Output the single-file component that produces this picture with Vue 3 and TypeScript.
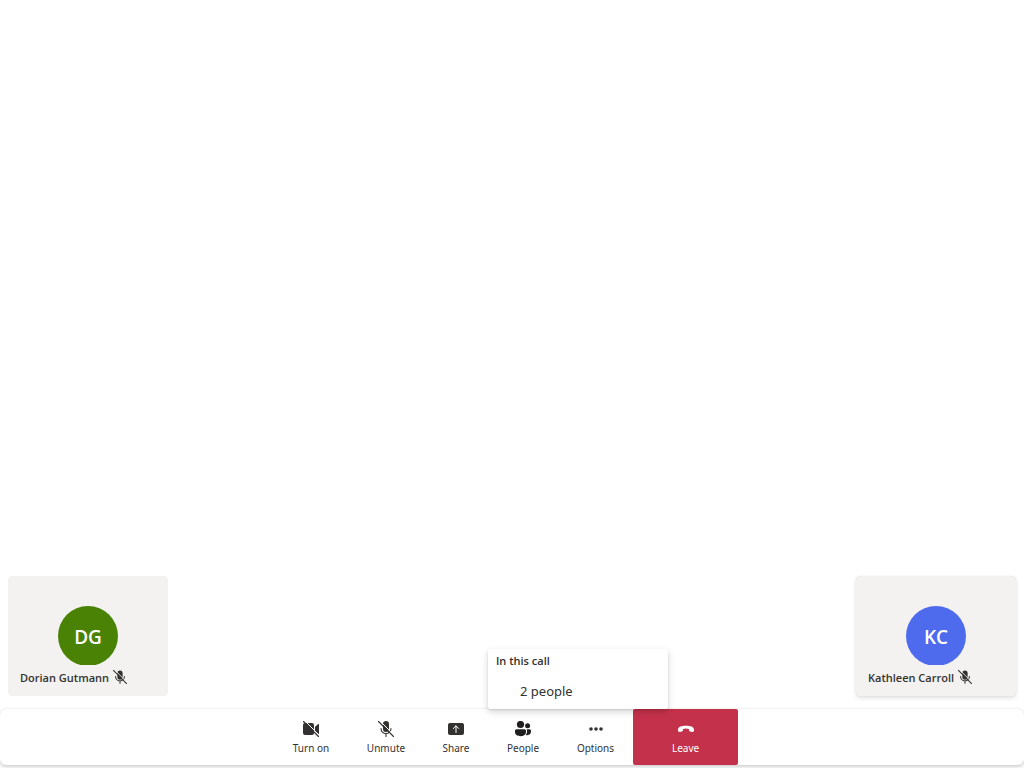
<script setup lang="ts">
import { ref } from 'vue'

interface Participant {
  name: string
  initials: string
  tone: string
  raised: boolean
}

interface Control {
  id: string
  label: string
}

const participants: Participant[] = [
  { name: 'Dorian Gutmann', initials: 'DG', tone: 'green', raised: false },
  { name: 'Kathleen Carroll', initials: 'KC', tone: 'blue', raised: true },
]

const controls: Control[] = [
  { id: 'camera', label: 'Turn on' },
  { id: 'mic', label: 'Unmute' },
  { id: 'share', label: 'Share' },
  { id: 'people', label: 'People' },
  { id: 'options', label: 'Options' },
  { id: 'leave', label: 'Leave' },
]

const peopleOpen = ref(true)

function press(id: string): void {
  if (id === 'people') peopleOpen.value = !peopleOpen.value
}
</script>

<template>
  <div class="call">
    <main class="stage">
      <section
        v-for="person in participants"
        :key="person.name"
        class="tile"
        :class="{ raised: person.raised }"
      >
        <div class="avatar" :class="person.tone">{{ person.initials }}</div>
        <div class="caption">
          <span>{{ person.name }}</span>
          <svg class="muted" viewBox="0 0 16 16" aria-hidden="true">
            <path d="M5 3.500a3 3 0 0 1 6 0V8a3 3 0 0 1-6 0z" fill="currentColor" />
            <path d="M3 7.500a5 5 0 0 0 10 0M8 12.500V15" fill="none" stroke="currentColor" stroke-width="1.2" stroke-linecap="round" />
            <path d="M1.300-.700 17 15" class="cut" />
            <path d="M.5.500l15 15" fill="none" stroke="currentColor" stroke-width="1.2" stroke-linecap="round" />
          </svg>
        </div>
      </section>
    </main>

    <nav class="bar" aria-label="Call controls">
      <div v-for="control in controls" :key="control.id" class="slot" :class="control.id">
        <button type="button" class="control" @click="press(control.id)">
          <svg class="icon" viewBox="0 0 16 16" aria-hidden="true">
            <template v-if="control.id === 'camera'">
              <path d="M2 2h7a2 2 0 0 1 2 2v8a2 2 0 0 1-2 2H2a2 2 0 0 1-2-2V4a2 2 0 0 1 2-2zM12 5.800 15 3.200q1-.6 1 .5v8.600q0 1.100-1 .5L12 10.200z" fill="currentColor" />
              <path d="M1.300-.700 17 15" class="cut" />
              <path d="M.5.500l15 15" fill="none" stroke="currentColor" stroke-width="1.2" stroke-linecap="round" />
            </template>
            <template v-else-if="control.id === 'mic'">
              <path d="M5 3a3 3 0 0 1 6 0v5a3 3 0 0 1-6 0z" fill="currentColor" />
              <path d="M3 7.500a5 5 0 0 0 10 0M8 12.500v3" fill="none" stroke="currentColor" stroke-width="1.1" stroke-linecap="round" />
              <path d="M1.300-.700 17 15" class="cut" />
              <path d="M.5.500l15 15" fill="none" stroke="currentColor" stroke-width="1.1" stroke-linecap="round" />
            </template>
            <template v-else-if="control.id === 'share'">
              <rect y="2" width="16" height="12" rx="2" fill="currentColor" />
              <path d="M8 11.500V5M5.300 7.500 8 4.800l2.700 2.700" fill="none" stroke="#fff" stroke-width="1" stroke-linecap="round" stroke-linejoin="round" />
            </template>
            <template v-else-if="control.id === 'people'">
              <circle cx="5.500" cy="3.500" r="3.600" fill="currentColor" />
              <circle cx="12.600" cy="4.700" r="2.500" fill="currentColor" />
              <path d="M1.500 8.300h8a1.500 1.500 0 0 1 1.500 1.500v1c0 3-2.300 4.400-5.500 4.400S0 13.800 0 10.800v-1a1.500 1.500 0 0 1 1.500-1.500z" fill="currentColor" />
              <path d="M11.600 8.300h3A1.500 1.500 0 0 1 16 9.800v.8c0 2.300-1.500 3.600-3.800 3.600q-.8 0-1.500-.2c.8-.9 1.300-2 1.300-3.200v-1q0-.9-.4-1.500z" fill="currentColor" />
            </template>
            <template v-else-if="control.id === 'options'">
              <circle cx="3" cy="8" r="1.800" fill="currentColor" />
              <circle cx="8" cy="8" r="1.800" fill="currentColor" />
              <circle cx="13" cy="8" r="1.800" fill="currentColor" />
            </template>
            <path
              v-else
              d="M0 8.300C.3 5.700 3.500 4.700 8 4.700s7.700 1 8 3.600q.2 1.400-.4 2.200-.5.600-1.300.400l-2.200-.400q-1-.2-1.100-1.200l-.1-1.300Q8 7.200 5.100 8L5 9.300q-.1 1-1.100 1.200l-2.200.400q-.8.2-1.300-.400Q-.2 9.700 0 8.300z"
              fill="currentColor"
            />
          </svg>
          <span>{{ control.label }}</span>
        </button>
        <div v-if="control.id === 'people' && peopleOpen" class="menu">
          <h2>In this call</h2>
          <button type="button" class="entry">2 people</button>
        </div>
      </div>
    </nav>
  </div>
</template>

<style>
body {
  margin: 0;
  background: #fff;
}
</style>

<style scoped>
.call {
  display: flex;
  flex-direction: column;
  box-sizing: border-box;
  min-height: 100vh;
  padding-bottom: 3px;
  font-family: "Noto Sans", "Open Sans", sans-serif;
  color: #323130;
  background: #fff;
}

.stage {
  flex: 1;
  display: flex;
  align-items: flex-end;
  justify-content: space-between;
  padding: 8px 8px 13px;
}

.tile {
  display: flex;
  flex-direction: column;
  align-items: center;
  justify-content: flex-end;
  box-sizing: border-box;
  width: 160px;
  height: 120px;
  padding-bottom: 7px;
  border-radius: 4px;
  background: #f3f2f1;
}

.raised {
  box-shadow: 0 2px 4px rgba(0, 0, 0, 0.13), 0 0 1px rgba(0, 0, 0, 0.11);
}

.avatar {
  flex: none;
  width: 60px;
  height: 60px;
  margin-bottom: -1px;
  border-radius: 50%;
  color: #fff;
  font-family: "Open Sans", sans-serif;
  font-size: 19px;
  font-weight: 600;
  line-height: 62px;
  text-align: center;
}

.green {
  background: #498205;
}

.blue {
  background: #4f6bed;
}

.caption {
  position: relative;
  display: flex;
  align-items: center;
  align-self: stretch;
  gap: 4px;
  height: 24px;
  padding-left: 12px;
  background: #f3f2f1;
  font-family: "Open Sans", sans-serif;
  font-size: 11px;
  font-weight: 600;
  white-space: nowrap;
}

.muted {
  width: 14px;
  height: 14px;
}

.cut {
  fill: none;
  stroke: #fff;
  stroke-width: 1;
}

.muted .cut {
  stroke: #f3f2f1;
}

.bar {
  display: flex;
  justify-content: center;
  height: 56px;
  padding-right: 12px;
  border-radius: 6px;
  background: #fff;
  box-shadow: 0 2px 4px rgba(0, 0, 0, 0.18), 0 0 2px rgba(0, 0, 0, 0.11);
}

.slot {
  position: relative;
  display: flex;
  width: 75px;
}

.camera {
  width: 74px;
}

.mic {
  width: 76px;
}

.share {
  width: 64px;
}

.people {
  width: 70px;
}

.leave {
  width: 105px;
}

.control {
  display: flex;
  flex: 1;
  flex-direction: column;
  align-items: center;
  gap: 4px;
  padding: 12px 0 0;
  border: 0;
  border-radius: 2px;
  background: none;
  color: inherit;
  font-family: inherit;
  font-size: 10px;
  line-height: 14px;
  cursor: pointer;
}

.leave .control {
  background: #c4314b;
  color: #fff;
}

.icon {
  width: 16px;
  height: 16px;
}

.people .icon {
  color: #201f1e;
}

.menu {
  position: absolute;
  bottom: 100%;
  left: 0;
  z-index: 1;
  width: 180px;
  height: 60px;
  border-radius: 2px;
  background: #fff;
  box-shadow: 0 3px 7px rgba(0, 0, 0, 0.16), 0 1px 2px rgba(0, 0, 0, 0.11);
}

.menu h2 {
  margin: 0;
  padding-left: 8px;
  font-family: "Open Sans", sans-serif;
  font-size: 11px;
  font-weight: 600;
  line-height: 24px;
}

.entry {
  display: block;
  width: 100%;
  padding: 0 0 0 32px;
  border: 0;
  background: none;
  color: inherit;
  font-family: inherit;
  font-size: 13px;
  line-height: 36px;
  text-align: left;
}
</style>
